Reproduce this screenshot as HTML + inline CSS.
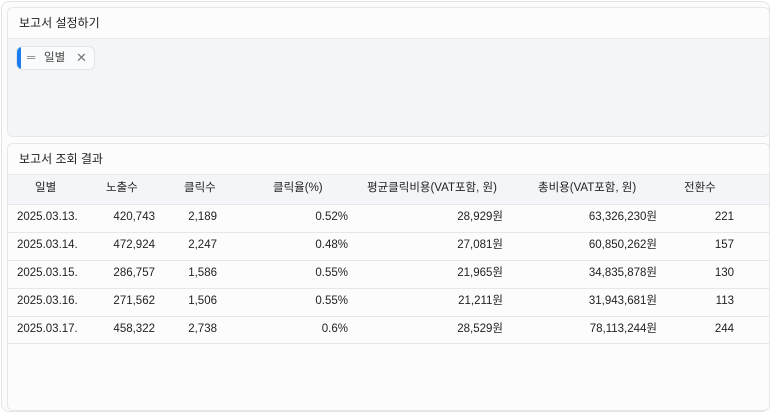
<!DOCTYPE html>
<html><head><meta charset="utf-8"><style>
body{margin:0;width:771px;height:413px;background:#fff;font-family:"Liberation Sans","Noto Sans CJK KR",sans-serif;font-size:12px;color:#222;position:relative;overflow:hidden}
.outer{position:absolute;left:1px;top:1px;width:767px;height:409px;border:1px solid #e3e4e8;border-radius:8px;background:#fcfcfd}
.p{position:absolute;left:7px;width:761px;border:1px solid #e6e7ea;border-radius:6px;background:#fcfcfd;overflow:hidden}
.h{height:30px;line-height:30px;padding-left:11px;font-size:12px;color:#222;border-bottom:1px solid #e8e9ec}
.chip{position:absolute;left:8px;top:7px;width:79px;height:24px;border:1px solid #e2e4e8;border-radius:6px;background:#fafbfc;box-sizing:border-box;overflow:hidden}
.chip .b{position:absolute;left:0;top:0;width:4px;height:100%;background:#1a7cf0}
.c{position:absolute;white-space:nowrap;font-size:11.5px;line-height:16px;height:16px}
.r{position:absolute;left:0;width:761px;height:1px;background:#e6e7ea}
</style></head><body>
<div class="outer"></div>
<div class="p" style="top:7px;height:128px">
 <div class="h">보고서 설정하기</div>
 <div style="position:absolute;top:31px;left:0;right:0;bottom:0;background:#f4f5f9">
  <div class="chip"><div class="b"></div>
   <span class="c" style="left:10px;top:3px;color:#888">═</span>
   <span class="c" style="left:27px;top:3px;color:#444">일별</span>
   <span class="c" style="left:59px;top:3px;color:#777;font-size:13px">✕</span>
  </div>
 </div>
</div>
<div class="p" style="top:143px;height:266px">
 <div class="h">보고서 조회 결과</div>
 <div style="position:absolute;top:31px;left:0;width:761px;height:29px;background:#f4f5f9"></div>
 <div class="r" style="top:60px"></div><div class="r" style="top:88px"></div><div class="r" style="top:116px"></div><div class="r" style="top:144px"></div><div class="r" style="top:172px"></div><div class="r" style="top:199px"></div>
</div>
<div id="t"></div>
<script>
var H=[["일별",35],["노출수",106],["클릭수",184],["클릭율(%)",273],["평균클릭비용(VAT포함, 원)",367],["총비용(VAT포함, 원)",538],["전환수",684]];
var D=[["2025.03.13.","420,743","2,189","0.52%","28,929원","63,326,230원","221"],
["2025.03.14.","472,924","2,247","0.48%","27,081원","60,850,262원","157"],
["2025.03.15.","286,757","1,586","0.55%","21,965원","34,835,878원","130"],
["2025.03.16.","271,562","1,506","0.55%","21,211원","31,943,681원","113"],
["2025.03.17.","458,322","2,738","0.6%","28,529원","78,113,244원","244"]];
var R=[155,217,348,503,657,734];var s="";
H.forEach(function(h){s+='<span class="c" style="left:'+h[1]+'px;top:180px">'+h[0]+'</span>';});
D.forEach(function(d,i){var y=209+i*28;s+='<span class="c" style="left:17px;top:'+y+'px">'+d[0]+'</span>';
for(var j=1;j<7;j++)s+='<span class="c" style="right:'+(771-R[j-1])+'px;top:'+y+'px">'+d[j]+'</span>';});
document.getElementById('t').innerHTML=s;
</script>
</body></html>
